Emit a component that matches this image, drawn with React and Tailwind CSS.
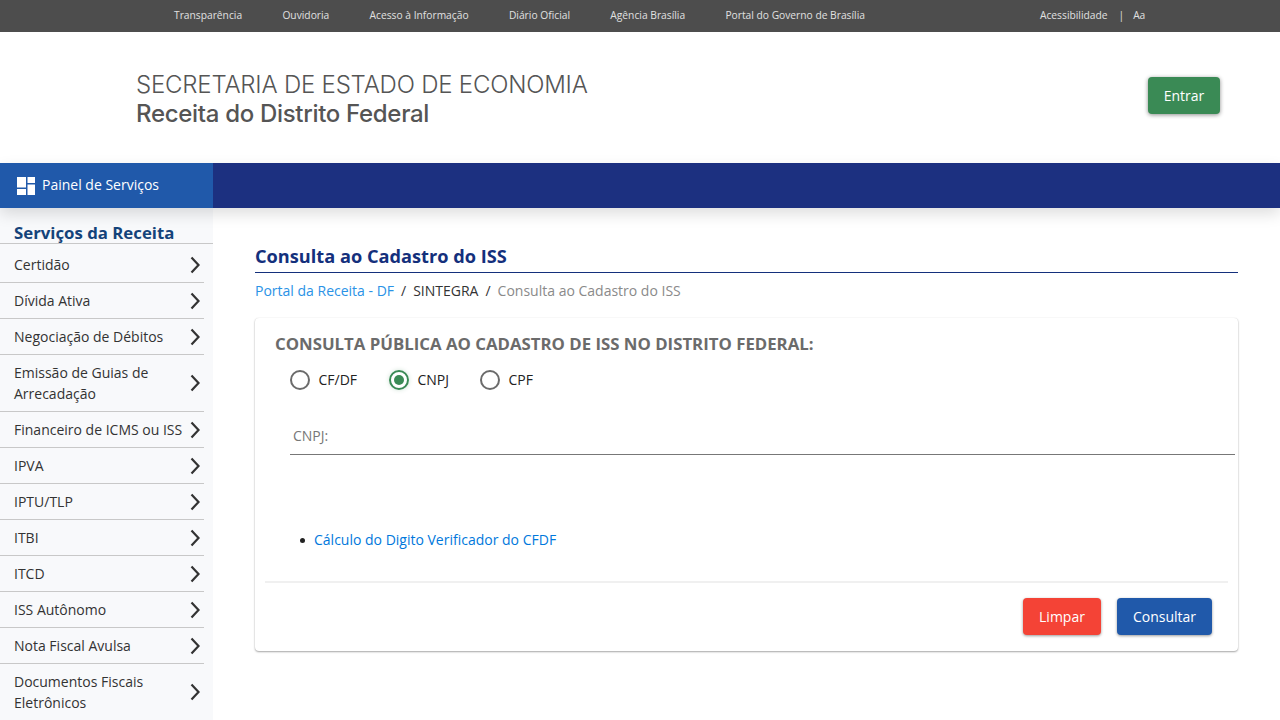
import React from 'react';

const topLinks = ['Transparência', 'Ouvidoria', 'Acesso à Informação', 'Diário Oficial', 'Agência Brasília', 'Portal do Governo de Brasília'];

const menu = [
    'Certidão',
    'Dívida Ativa',
    'Negociação de Débitos',
    'Emissão de Guias de Arrecadação',
    'Financeiro de ICMS ou ISS',
    'IPVA',
    'IPTU/TLP',
    'ITBI',
    'ITCD',
    'ISS Autônomo',
    'Nota Fiscal Avulsa',
    'Documentos Fiscais Eletrônicos',
];

const Chevron = () => (
    <svg width="12" height="18" viewBox="0 0 12 18" fill="none" className="shrink-0">
        <path d="M2.5 1.5 L9.5 9 L2.5 16.5" stroke="#333" strokeWidth="2.2" />
    </svg>
);

const Radio = ({ label, checked, className }) => (
    <label className={`flex items-center ${className}`}>
        <span className={`w-5 h-5 rounded-full border-2 flex items-center justify-center ${checked ? 'border-[#3a8a55] shadow-[0_0_4px_rgba(58,138,85,0.25)]' : 'border-[#6b6b6b]'}`}>
            {checked && <span className="w-2.5 h-2.5 rounded-full bg-[#3a8a55]"></span>}
        </span>
        <span className="ml-[8.5px] text-sm text-[#222]">{label}</span>
    </label>
);

const App = () => {
    return (
        <div className="h-screen overflow-hidden bg-white flex flex-col font-['Open_Sans',sans-serif]">
            {/* barra do governo */}
            <div className="h-8 bg-[#4d4d4d] flex items-center pl-[174px] text-[10.25px] text-[#e0e0e0] shrink-0">
                <div className="flex gap-[40.3px]">
                    {topLinks.map((link) => <span key={link}>{link}</span>)}
                </div>
                <div className="flex ml-[175px]">
                    <span>Acessibilidade</span>
                    <span className="ml-[11px]">|</span>
                    <span className="ml-[9px]">Aa</span>
                </div>
            </div>

            {/* cabecalho */}
            <div className="h-[131px] shrink-0 flex items-center justify-between pl-[136px] pr-[60px]">
                <div className="font-['Inter',sans-serif] pt-[3px]">
                    <div className="text-[24px] leading-[29px] tracking-[-0.21px] font-light text-[#555]">SECRETARIA DE ESTADO DE ECONOMIA</div>
                    <div className="text-[24px] leading-[29px] tracking-[-0.31px] font-medium text-[#555]">Receita do Distrito Federal</div>
                </div>
                <button className="w-[72px] h-[37px] mb-[5px] pt-px bg-[#3a8a55] rounded text-sm text-white shadow-[0_1px_4px_rgba(0,0,0,0.45)]">Entrar</button>
            </div>

            {/* barra azul */}
            <div className="h-[45px] shrink-0 flex bg-[#1c3080] relative z-10 shadow-[0_6px_14px_rgba(0,0,0,0.13)]">
                <div className="w-[213px] bg-[#2059aa] flex items-center pl-[17px] text-sm text-white">
                    <svg width="18" height="18" viewBox="0 0 18 18" fill="#fff" className="mr-[7px]">
                        <rect x="0" y="0" width="9" height="10.5" />
                        <rect x="10.5" y="0" width="7.5" height="6" />
                        <rect x="0" y="12" width="9" height="6" />
                        <rect x="10.5" y="7.5" width="7.5" height="10.5" />
                    </svg>
                    <span className="mb-[2px]">Painel de Serviços</span>
                </div>
            </div>

            <div className="flex flex-1 min-h-0">
                {/* menu lateral */}
                <aside className="w-[213px] shrink-0 bg-[#f8f9fb] overflow-hidden">
                    <h2 className="box-content h-[22px] pt-[13px] pl-[14px] text-[16.8px] leading-[24px] font-bold text-[#14437a] border-b border-[#c8c8c8]">Serviços da Receita</h2>
                    <ul className="w-[204px] mt-[3px]">
                        {menu.map((item) => (
                            <li key={item} className={`flex items-center justify-between pl-[14px] pr-[3px] text-sm leading-[21px] text-[#333] border-b border-[#c8c8c8] ${item.length > 26 ? 'h-[57px]' : 'h-9'}`}>
                                <span className={item.length > 26 ? 'w-[160px]' : ''}>{item}</span>
                                <Chevron />
                            </li>
                        ))}
                    </ul>
                </aside>

                {/* conteudo */}
                <main className="flex-1 min-w-0 pl-[42px] pr-[42px] pt-[35px]">
                    <h1 className="text-[18.2px] leading-[27px] font-bold text-[#14307c] border-b border-[#14307c] pb-[2px] h-[30px]">Consulta ao Cadastro do ISS</h1>
                    <div className="mt-2 text-sm leading-5 flex">
                        <span className="text-[#2a92e6]">Portal da Receita - DF</span>
                        <span className="mx-[7px] text-[#333]">/</span>
                        <span className="text-[#333]">SINTEGRA</span>
                        <span className="mx-[7px] text-[#333]">/</span>
                        <span className="text-[#8a8a8a]">Consulta ao Cadastro do ISS</span>
                    </div>

                    <section className="mt-[17px] h-[333px] rounded bg-white shadow-[0_1px_2px_rgba(0,0,0,0.35),0_0_1px_rgba(0,0,0,0.12)] px-[10px]">
                        <h3 className="pt-[14px] pl-[10px] text-[16.8px] leading-[24px] font-bold text-[#6b6b6b]">CONSULTA PÚBLICA AO CADASTRO DE ISS NO DISTRITO FEDERAL:</h3>
                        <div className="flex mt-[12px] pl-[25px] h-[24px] items-center">
                            <Radio label="CF/DF" className="w-[99px]" />
                            <Radio label="CNPJ" checked className="w-[91px]" />
                            <Radio label="CPF" />
                        </div>
                        <div className="mt-[33px] ml-[25px] -mr-[7px] h-[30px] pt-px border-b border-[#777] pl-[3px] text-sm leading-[20px] text-[#777]">CNPJ:</div>
                        <ul className="mt-[75px] ml-[35px]">
                            <li className="flex items-center text-sm leading-5 text-[#0078dc]">
                                <span className="w-[5px] h-[5px] rounded-full bg-[#222] mr-[9px]"></span>
                                Cálculo do Digito Verificador do CFDF
                            </li>
                        </ul>
                        <div className="mt-[31px] border-t-2 border-[#f0f0f0] flex justify-end gap-4 pt-[15px] pr-[16px]">
                            <button className="w-[78px] h-[37px] rounded bg-[#f44336] text-sm text-white shadow-[0_1px_3px_rgba(0,0,0,0.4)]">Limpar</button>
                            <button className="w-[95px] h-[37px] rounded bg-[#2059aa] text-sm text-white shadow-[0_1px_3px_rgba(0,0,0,0.4)]">Consultar</button>
                        </div>
                    </section>
                </main>
            </div>
        </div>
    );
};

export default App;
